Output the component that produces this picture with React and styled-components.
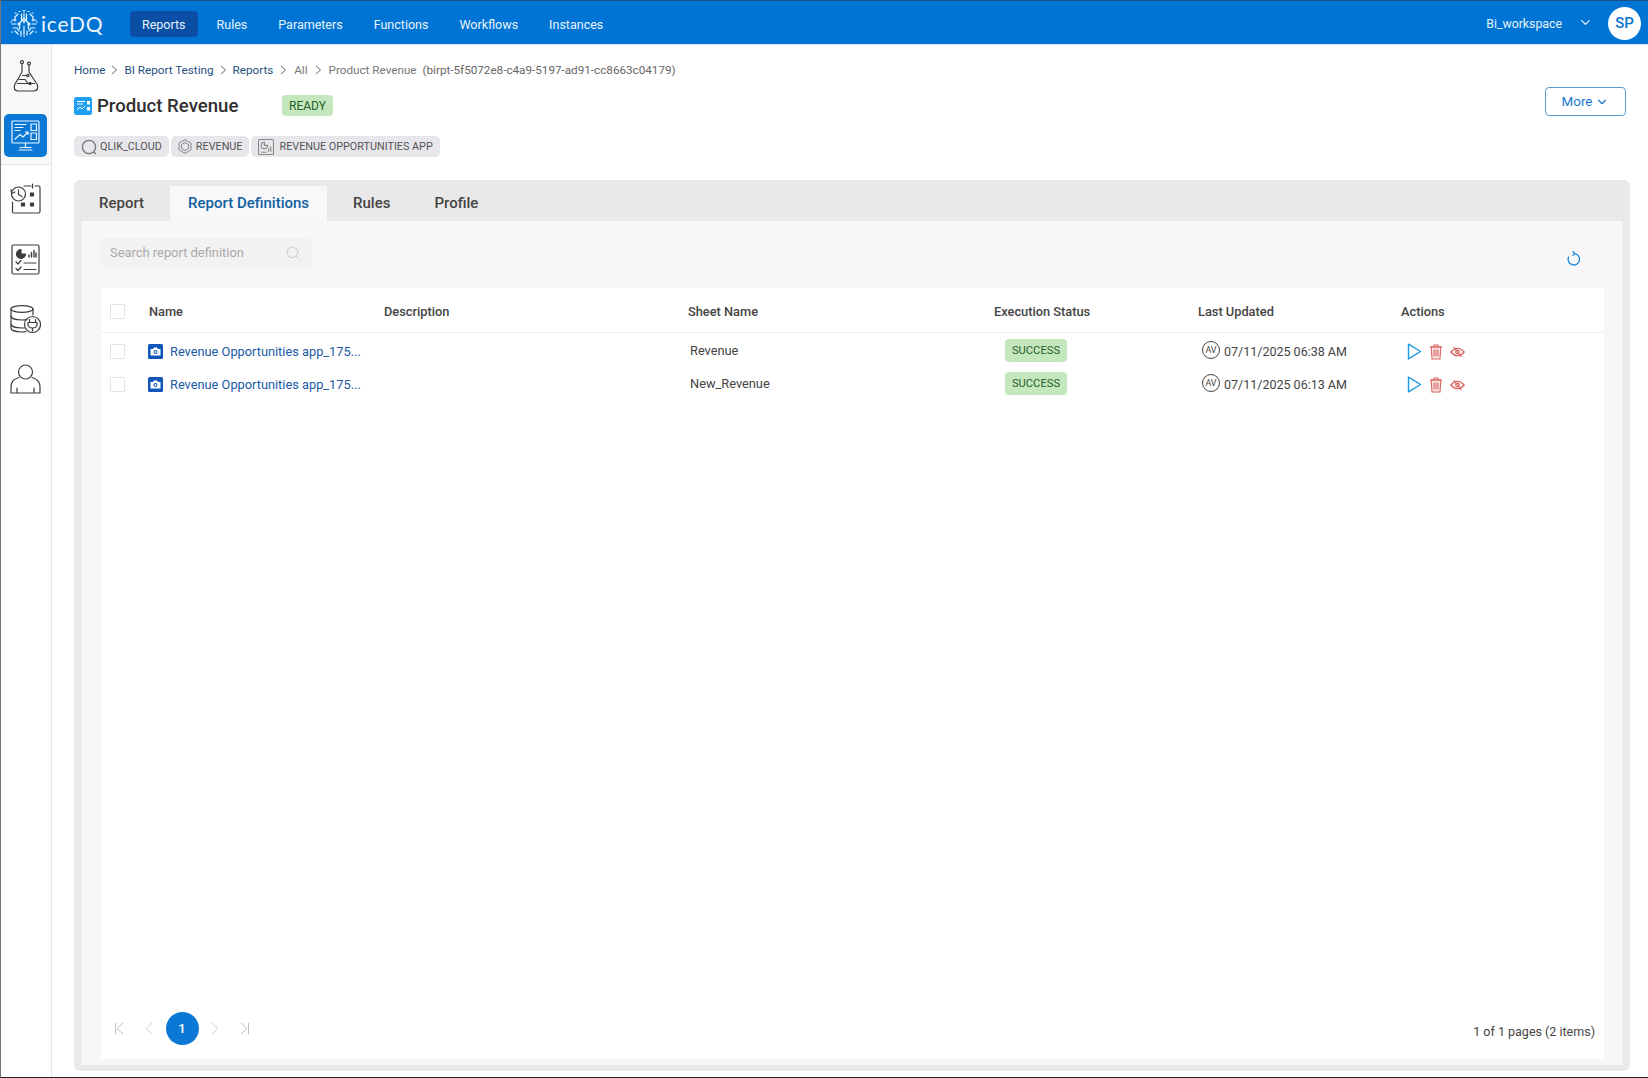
import React from "react";
import styled, { createGlobalStyle } from "styled-components";
import { ChevronDown, Search } from "lucide-react";

const Global = createGlobalStyle`
  html, body { margin: 0; padding: 0; background: #fff; }
  * { box-sizing: border-box; }
  body { font-family: Roboto, "Noto Sans", sans-serif; color: #333; }
`;

const Window = styled.div`
  width: 1648px; height: 1078px; display: flex; flex-direction: column; overflow: hidden;
  border-left: 1px solid #777; border-bottom: 1px solid #222; background: #fff;
`;
const TopBar = styled.header`
  height: 45px; flex: none; display: flex; align-items: center; background: #0074d4;
  border-top: 1px solid #1a5288; border-bottom: 1px solid #cfe3f5; padding: 3px 7px 0 9px; color: #fff;
`;
const Brand = styled.div`
  display: flex; align-items: center; gap: 3px; width: 120px; flex: none; margin-top: -1px;
`;
const BrandName = styled.span`
  font-family: "Lato", sans-serif; font-size: 21px; font-weight: 400; letter-spacing: .8px; color: #eef6fd;
`;
const Nav = styled.nav`display: flex; gap: 7px; flex: 1;`;
const NavItem = styled.a`
  height: 26px; padding: 0 12px; display: flex; align-items: center; border-radius: 4px;
  font-size: 12.5px; color: #e8f3fc; background: ${p => (p.$active ? "#0a4ea6" : "transparent")};
`;
const Workspace = styled.span`font-size: 12.3px; color: #e8f3fc;`;
const WorkspaceChevron = styled(ChevronDown)`margin: -3px 15px 0 16px; color: #e8f3fc;`;
const Avatar = styled.div`
  width: 33px; height: 33px; margin-top: -2px; border-radius: 50%; background: #fff; color: #0a74cc;
  font-size: 15px; font-weight: 500; display: flex; align-items: center; justify-content: center;
`;

const Body = styled.div`flex: 1; display: flex; min-height: 0;`;
const Sidebar = styled.aside`
  width: 51px; flex: none; border-right: 1px solid #e6e6e6; display: flex; flex-direction: column; align-items: center;
`;
const SideTop = styled.div`
  width: 100%; height: 120px; flex: none; display: flex; flex-direction: column; align-items: center;
  background: #f8f8f8; border-bottom: 1px solid #e6e6e6; padding: 15px 1px 0 0; gap: 22px;
`;
const SideTile = styled.div`
  width: 43px; height: 43px; border-radius: 5px; display: flex; align-items: center; justify-content: center;
  background: #0b78d6;
`;
const SideList = styled.div`
  display: flex; flex-direction: column; align-items: center; padding: 18px 1px 0 0; gap: 30px;
`;

const Main = styled.main`
  flex: 1; min-width: 0; display: flex; flex-direction: column; padding: 16px 18px 6px 22px;
`;
const Crumbs = styled.div`
  height: 18px; display: flex; align-items: center; font-size: 11.7px; color: #1f4f7e;
`;
const Crumb = styled.span`color: ${p => (p.$muted ? "#777" : "#1f4f7e")};`;
const CrumbSep = styled.svg`width: 7px; height: 10px; margin: 0 ${p => p.$gap || 6}px; flex: none;`;
const CrumbId = styled.span`margin-left: 6px; color: #666;`;

const TitleRow = styled.div`
  display: flex; justify-content: space-between; align-items: flex-start; margin-top: 8px; height: 30px;
`;
const TitleGroup = styled.div`display: flex; align-items: center; margin-top: 8px; height: 21px;`;
const Title = styled.h1`
  margin: 0 0 0 5px; font-size: 18.6px; font-weight: 500; color: #303030; width: 185px;
`;
const Badge = styled.span`
  display: inline-flex; align-items: center; justify-content: center; border-radius: 4px;
  background: #c4e7bd; color: #26602a; font-size: ${p => p.$size}px; height: ${p => p.$h}px; width: ${p => p.$w}px;
`;
const MoreButton = styled.button`
  width: 81px; height: 29px; margin-right: 4px; border: 1px solid #5c9ccf; border-radius: 4px; background: #fff; color: #1678cf;
  font: 400 13.4px Roboto, sans-serif; display: flex; align-items: center; justify-content: center; gap: 3px; padding: 0;
`;
const ChipRow = styled.div`display: flex; gap: 2px; margin-top: 19px;`;
const Chip = styled.span`
  height: 21px; display: inline-flex; align-items: center; gap: ${p => p.$gap || 3}px; padding: 0 7px 0 7px; border-radius: 5px;
  background: #e7e7eb; color: #555; font-size: 10.8px;
`;

const Panel = styled.section`
  flex: 1; min-height: 0; margin-top: 23px; border-radius: 6px; background: #e9e9e9; padding: 6px 7px;
  display: flex; flex-direction: column;
`;
const Tabs = styled.div`height: 35px; flex: none; display: flex; gap: 8px;`;
const Tab = styled.div`
  padding: 0 18px 2px; display: flex; align-items: center; font-size: 15px; font-weight: 500;
  color: ${p => (p.$active ? "#11609f" : "#444")}; background: ${p => (p.$active ? "#f8f8fa" : "transparent")};
`;
const TabBody = styled.div`
  flex: 1; min-height: 0; background: #f7f7f9; padding: 17px 19px 6px 19px; display: flex; flex-direction: column;
`;
const Toolbar = styled.div`
  height: 29px; flex: none; display: flex; justify-content: space-between; align-items: center; padding-right: 23px;
`;
const SearchBox = styled.div`
  width: 212px; height: 29px; border-radius: 4px; background: #f2f2f3; display: flex; align-items: center;
  justify-content: space-between; padding: 0 11px 0 10px; color: #a9a9a9; font-size: 12.9px;
`;
const RefreshSvg = styled.svg`margin-top: 12px; flex: none;`;
const TableCard = styled.div`
  flex: 1; min-height: 0; margin: 21px 0 0 1px; background: #fff; display: flex; flex-direction: column;
`;
const columns = "48px 235px 304px 306px 204px 203px 1fr";
const HeadRow = styled.div`
  height: 45px; flex: none; display: grid; grid-template-columns: ${columns}; align-items: center;
  border-bottom: 1px solid #f0f0f2; padding-top: 2px; font-size: 12.8px; font-weight: 500; color: #444; margin-bottom: 2px;
`;
const DataRow = styled.div`
  height: 33px; flex: none; display: grid; grid-template-columns: ${columns}; align-items: center;
  font-size: 12.8px; color: #444;
`;
const CheckCell = styled.div`display: flex; padding-left: 9px;`;
const Check = styled.span`
  width: 15px; height: 15px; border: 1px solid #e2e2e4; border-radius: 2px; background: #fff;
`;
const NameCell = styled.div`display: flex; align-items: center; gap: 7px; margin-left: -1px; color: #1a5aa6;`;
const SheetCell = styled.div`padding-left: 2px; margin-top: -2px;`;
const StatusCell = styled.div`padding-left: 11px; margin-top: -2px;`;
const UpdatedCell = styled.div`display: flex; align-items: center; gap: 4px; padding-left: 4px; font-size: 12.5px;`;
const UserCircle = styled.span`
  width: 18px; height: 18px; border: 1px solid #444; border-radius: 50%; font-size: 9px; display: flex;
  align-items: center; justify-content: center; margin-top: -3px;
`;
const ActionsCell = styled.div`display: flex; align-items: center; gap: 7px; padding-left: 6px;`;

const Pager = styled.div`
  margin-top: auto; display: flex; align-items: center; justify-content: space-between; padding: 0 9px 14px 3px;
`;
const PagerControls = styled.div`display: flex; align-items: center;`;
const PagerArrow = styled.span`width: 30px; display: flex; justify-content: center; color: #bdbdbd;`;
const PageCurrent = styled.span`
  width: 33px; height: 33px; border-radius: 50%; background: #0b78d6; color: #fff; font-size: 13px; font-weight: 500;
  display: flex; align-items: center; justify-content: center; margin: 0 1.5px;
`;
const PagerInfo = styled.span`font-size: 12.5px; color: #444; margin-top: 6px;`;

const Logo = () => (
  <svg width="28" height="27" viewBox="0 0 28 27" fill="none" stroke="#eaf5fe" strokeWidth="1.2" strokeLinecap="round">
    <path d="M14 3v10M11.5 4v7L9.5 13v6M16.5 4v7l2 2v6M14 16v9M11 21v5M17 21v4" />
    <path d="M8 4 5 7v4M20 4l3 3v4M6 14H2M22 14h4M3 18h4l2 3M25 18h-4l-2 3M2 10h4M26 10h-4M8 24l-3-3M20 24l3-3" />
    <path d="M9 1.5h1M13 .8h2M18 1.5h1M5 3h1M22 3h1M.8 12h1M26.2 12h1M1.5 22h1M25.5 22h1M14 26.5h.5" />
    <circle cx="14" cy="10" r="1.5" />
    <circle cx="9" cy="14" r="1" />
    <circle cx="19" cy="14" r="1" />
  </svg>
);

const SideSvg = styled.svg`display: block; fill: none; stroke: ${p => p.$c || "#3d3d3d"}; stroke-width: 1.2; stroke-linecap: round; stroke-linejoin: round;`;

const FlaskIcon = () => (
  <SideSvg width="26" height="32" viewBox="0 0 26 32">
    <circle cx="9" cy="2.2" r="1.5" />
    <circle cx="16" cy="3.6" r="1.5" />
    <path d="M9 3.7V12L1.8 24.5Q-.2 30.5 5 31H21Q26.2 30.5 24.2 24.5L16 12V5.1" />
    <path d="M4.5 23.5H21.5M6 19.5H12M9.5 15.5H13.5M12 19.5 15 23.5" />
    <circle cx="14.8" cy="15.5" r="1.2" />
    <circle cx="17" cy="23.5" r="1.2" />
  </SideSvg>
);
const MonitorIcon = () => (
  <SideSvg $c="#e9f5ff" width="29" height="31" viewBox="0 0 29 31">
    <rect x="1" y="1" width="27" height="22" rx="1" />
    <path d="M4 4.5H15M4 7.5H12M4 10.5H9M4 19 9 14.5 12 17 17 12M14.5 12H17V14.5" />
    <rect x="20" y="4" width="5.5" height="6.5" />
    <rect x="20" y="13" width="5.5" height="6.5" />
    <path d="M14.5 23V27M9 27.5H20M8 30H21" />
  </SideSvg>
);
const CalendarClockIcon = () => (
  <SideSvg width="31" height="31" viewBox="0 0 31 31">
    <path d="M14 3H21M25 3H28.5Q30 3 30 4.5V28.5Q30 30 28.5 30H4Q2.5 30 2.5 28.5V19" />
    <path d="M22.5 1V5" />
    <circle cx="8.5" cy="11" r="7" />
    <path d="M8.5 7V11.5L12 13.5M1 6.5 1.7 10.5 5 9" />
    <rect x="20.5" y="10" width="3" height="3" fill="#3d3d3d" />
    <rect x="11.5" y="20" width="3" height="3" fill="#3d3d3d" />
    <rect x="20.5" y="20" width="3" height="3" fill="#3d3d3d" />
  </SideSvg>
);
const ReportIcon = () => (
  <SideSvg width="29" height="31" viewBox="0 0 29 31">
    <rect x="1" y="1" width="27" height="29" rx="1.5" />
    <path d="M10 5.5A4.5 4.5 0 1 0 14.5 10H10Z" fill="#3d3d3d" />
    <path d="M18 13V11M20.5 13V8.5M23 13V6.5M25 13V9" strokeWidth="1.4" />
    <path d="M5 18 7 20 10 16.5M5 24.5 7 26.5 10 23M13 19H25M13 25.5H25" />
  </SideSvg>
);
const DataPlugIcon = () => (
  <SideSvg width="31" height="29" viewBox="0 0 31 29">
    <ellipse cx="12" cy="4" rx="11" ry="3.3" />
    <path d="M1 4V23C1 25.5 6 27 12 27 13.5 27 14.5 27 16 26.5M23 4V10" />
    <path d="M1 11C1 13.5 6 15 12 15 13.5 15 15 15 17 14.5M1 19C1 21.5 6 23 12 23H14" />
    <circle cx="22.5" cy="19.5" r="8" />
    <path d="M19.5 14.5V17.5M25.5 14.5V17.5M18 17.5H27V19.5C27 21.5 25 23 22.5 23S18 21.5 18 19.5ZM22.5 23V26" />
  </SideSvg>
);
const PersonIcon = () => (
  <SideSvg width="31" height="30" viewBox="0 0 31 30">
    <circle cx="15.5" cy="8" r="7" />
    <path d="M9 13.5C3.5 15 1 18.5 1 23V29H30V23C30 18.5 27.5 15 22 13.5M7 29V24M24 29V24" />
  </SideSvg>
);
const TitleIcon = () => (
  <svg width="18" height="18" viewBox="0 0 18 18">
    <rect width="18" height="18" rx="2.5" fill="#1f9ff2" />
    <path d="M3 4.5H11M3 7H9M3 13 6 10 8 12 11 9" fill="none" stroke="#fff" strokeWidth="1" />
    <rect x="13" y="4" width="3" height="3.5" fill="#fff" />
    <rect x="13" y="10" width="3" height="3.5" fill="#fff" />
  </svg>
);
const QlikIcon = () => (
  <svg width="16" height="16" viewBox="0 0 16 16" fill="none" stroke="#777" strokeWidth="1.3">
    <circle cx="8" cy="8" r="6.6" />
    <path d="M12.5 12.8 14.8 15" />
  </svg>
);
const CubeIcon = () => (
  <svg width="14" height="15" viewBox="0 0 14 15" fill="none" stroke="#888" strokeWidth="1">
    <path d="M7 .7 13 4.2V10.8L7 14.3 1 10.8V4.2Z" />
    <path d="M7 3.5 10.5 5.5V9.5L7 11.5 3.5 9.5V5.5Z" />
  </svg>
);
const AppIcon = () => (
  <svg width="16" height="16" viewBox="0 0 15 15" fill="none" stroke="#888" strokeWidth="1">
    <rect x=".5" y=".5" width="14" height="14" rx="1" />
    <path d="M6 3A3 3 0 1 0 9 6H6Z" />
    <path d="M10 12V9M12 12V7M3 12.5H8" />
  </svg>
);
const CameraBadge = () => (
  <svg width="15" height="15" viewBox="0 0 15 15">
    <rect width="15" height="15" rx="1.5" fill="#0f56b8" />
    <path d="M2.5 5H5L6 3.5H9L10 5H12.5V11.5H2.5Z" fill="#fff" />
    <circle cx="7.5" cy="8" r="2" fill="#0f56b8" />
    <circle cx="7.5" cy="8" r="1" fill="#fff" />
  </svg>
);
const RefreshIcon = () => (
  <RefreshSvg width="15" height="15" viewBox="0 0 15 15" fill="none" stroke="#1a86d8" strokeWidth="1.3" strokeLinecap="round" strokeLinejoin="round">
    <path d="M8.4 2.6A5.7 5.7 0 1 1 2.6 6" />
    <path d="M7 .8 8.8 2.6 7 4.4" />
  </RefreshSvg>
);
const PlayIcon = () => (
  <svg width="15" height="17" viewBox="0 0 15 17" fill="none" stroke="#1a9ae4" strokeWidth="1.4" strokeLinejoin="round">
    <path d="M1.5 1.2 13.5 8.5 1.5 15.8Z" />
  </svg>
);
const TrashIcon = () => (
  <svg width="14" height="16" viewBox="0 0 14 16" stroke="#d9655f" strokeWidth="1.1">
    <path d="M2.2 3 3 15H11L11.8 3Z" fill="#fbe9e7" />
    <path d="M.8 3H13.2M5 3V1H9V3" fill="none" />
    <path d="M5 5.5V12.5M7 5.5V12.5M9 5.5V12.5" fill="none" />
  </svg>
);
const EyeSlashIcon = () => (
  <svg width="15" height="12" viewBox="0 0 15 12" fill="none" stroke="#d9655f" strokeWidth="1.2">
    <path d="M.8 6Q7.5-1.5 14.2 6 7.5 13.5.8 6Z" />
    <circle cx="7.5" cy="6" r="1.8" />
    <path d="M3.5 1 11.5 11" />
  </svg>
);
const PageEnd = ({ flip }) => (
  <svg width="10" height="13" viewBox="0 0 10 13" fill="none" stroke="#bdbdbd" strokeWidth="1" style={flip ? { transform: "scaleX(-1)" } : undefined}>
    <path d="M1.5 1V12M9 1 3 6.5 9 12" />
  </svg>
);
const PageStep = ({ flip }) => (
  <svg width="8" height="13" viewBox="0 0 8 13" fill="none" stroke="#d0d0d0" strokeWidth="1" style={flip ? { transform: "scaleX(-1)" } : undefined}>
    <path d="M7 1 1 6.5 7 12" />
  </svg>
);
const Sep = ({ gap }) => (
  <CrumbSep $gap={gap} viewBox="0 0 7 10" fill="none" stroke="#666" strokeWidth="1">
    <path d="M1 1 5.5 5 1 9" />
  </CrumbSep>
);

const navItems = ["Reports", "Rules", "Parameters", "Functions", "Workflows", "Instances"];
const tabs = ["Report", "Report Definitions", "Rules", "Profile"];
const rows = [
  { sheet: "Revenue", time: "07/11/2025 06:38 AM" },
  { sheet: "New_Revenue", time: "07/11/2025 06:13 AM" },
];

export default function App() {
  return (
    <>
      <Global />
      <Window>
        <TopBar>
          <Brand>
            <Logo />
            <BrandName>iceDQ</BrandName>
          </Brand>
          <Nav>
            {navItems.map((n, i) => <NavItem key={n} $active={i === 0}>{n}</NavItem>)}
          </Nav>
          <Workspace>Bi_workspace</Workspace>
          <WorkspaceChevron size={15} />
          <Avatar>SP</Avatar>
        </TopBar>
        <Body>
          <Sidebar>
            <SideTop>
              <FlaskIcon />
              <SideTile><MonitorIcon /></SideTile>
            </SideTop>
            <SideList>
              <CalendarClockIcon />
              <ReportIcon />
              <DataPlugIcon />
              <PersonIcon />
            </SideList>
          </Sidebar>
          <Main>
            <Crumbs>
              <Crumb>Home</Crumb><Sep />
              <Crumb>BI Report Testing</Crumb><Sep />
              <Crumb>Reports</Crumb><Sep gap={7} />
              <Crumb $muted>All</Crumb><Sep gap={7} />
              <Crumb $muted>Product Revenue</Crumb>
              <CrumbId>(birpt-5f5072e8-c4a9-5197-ad91-cc8663c04179)</CrumbId>
            </Crumbs>
            <TitleRow>
              <TitleGroup>
                <TitleIcon />
                <Title>Product Revenue</Title>
                <Badge $w={51} $h={21} $size={12}>READY</Badge>
              </TitleGroup>
              <MoreButton>More <ChevronDown size={14} /></MoreButton>
            </TitleRow>
            <ChipRow>
              <Chip><QlikIcon />QLIK_CLOUD</Chip>
              <Chip $gap={4}><CubeIcon />REVENUE</Chip>
              <Chip $gap={5}><AppIcon />REVENUE OPPORTUNITIES APP</Chip>
            </ChipRow>
            <Panel>
              <Tabs>
                {tabs.map((t, i) => <Tab key={t} $active={i === 1}>{t}</Tab>)}
              </Tabs>
              <TabBody>
                <Toolbar>
                  <SearchBox>
                    Search report definition
                    <Search size={16} strokeWidth={1.3} color="#c4c4c4" />
                  </SearchBox>
                  <RefreshIcon />
                </Toolbar>
                <TableCard>
                  <HeadRow>
                    <CheckCell><Check /></CheckCell>
                    <div>Name</div>
                    <div>Description</div>
                    <div>Sheet Name</div>
                    <div>Execution Status</div>
                    <div>Last Updated</div>
                    <div>Actions</div>
                  </HeadRow>
                  {rows.map(r => (
                    <DataRow key={r.sheet}>
                      <CheckCell><Check /></CheckCell>
                      <NameCell><CameraBadge />Revenue Opportunities app_175...</NameCell>
                      <div />
                      <SheetCell>{r.sheet}</SheetCell>
                      <StatusCell><Badge $w={62} $h={23} $size={11.2}>SUCCESS</Badge></StatusCell>
                      <UpdatedCell><UserCircle>AV</UserCircle>{r.time}</UpdatedCell>
                      <ActionsCell>
                        <PlayIcon />
                        <TrashIcon />
                        <EyeSlashIcon />
                      </ActionsCell>
                    </DataRow>
                  ))}
                  <Pager>
                    <PagerControls>
                      <PagerArrow><PageEnd /></PagerArrow>
                      <PagerArrow><PageStep /></PagerArrow>
                      <PageCurrent>1</PageCurrent>
                      <PagerArrow><PageStep flip /></PagerArrow>
                      <PagerArrow><PageEnd flip /></PagerArrow>
                    </PagerControls>
                    <PagerInfo>1 of 1 pages (2 items)</PagerInfo>
                  </Pager>
                </TableCard>
              </TabBody>
            </Panel>
          </Main>
        </Body>
      </Window>
    </>
  );
}
